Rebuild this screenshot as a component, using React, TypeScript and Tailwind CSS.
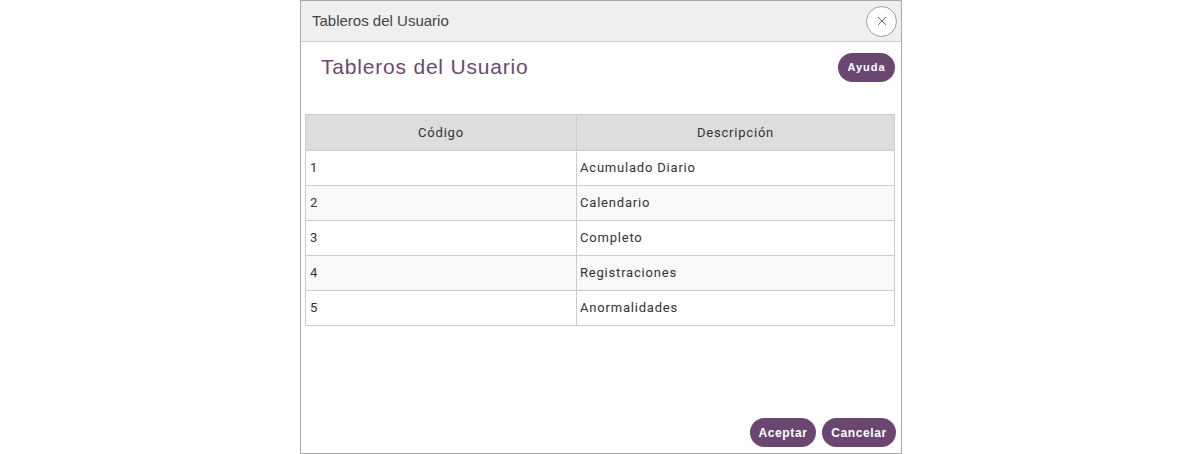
import React from "react";

const rows = [
  ["1", "Acumulado Diario"],
  ["2", "Calendario"],
  ["3", "Completo"],
  ["4", "Registraciones"],
  ["5", "Anormalidades"],
];

export default function App() {
  return (
    <div className="w-[1200px] h-[454px] bg-white">
      <div className="ml-[300px] w-[602px] h-[454px] border border-[#aaaaaa] flex flex-col bg-white">
        <div className="h-[41px] bg-[#efefef] border-b border-[#cccccc] flex items-center justify-between pl-[11px] pr-[4px] shrink-0">
          <span className="text-[15px] text-[#444444] font-['Liberation_Sans',Arial,sans-serif]">Tableros del Usuario</span>
          <button className="w-[31px] h-[31px] rounded-full border border-[#a0a0a0] bg-white flex items-center justify-center text-[#555555]">
            <svg width="10" height="10" viewBox="0 0 10 10">
              <path d="M1 1L9 9M9 1L1 9" stroke="#666" strokeWidth="1" />
            </svg>
          </button>
        </div>
        <div className="flex items-start justify-between pl-[20px] pr-[6px] pt-[12px] h-[72px] shrink-0">
          <h1 className="text-[21px] leading-[26px] tracking-[0.8px] text-[#6a4a6e] font-['Liberation_Sans',Arial,sans-serif]">Tableros del Usuario</h1>
          <button className="-mt-[1px] h-[29px] w-[57px] rounded-full bg-[#6a4670] text-white text-[11px] font-bold tracking-[1px] font-['Liberation_Sans',Arial,sans-serif]">Ayuda</button>
        </div>
        <div className="px-[4px] flex-1">
          <table className="w-[590px] border-collapse font-['Roboto',sans-serif] text-[13px] tracking-[0.8px] text-[#333333]">
            <thead>
              <tr className="h-[36px] bg-[#dddddd]">
                <th className="w-[271px] border border-[#cccccc] font-normal text-center">Código</th>
                <th className="border border-[#cccccc] font-normal text-center">Descripción</th>
              </tr>
            </thead>
            <tbody>
              {rows.map(([c, d], i) => (
                <tr key={c} className={i % 2 === 1 ? "h-[35px] bg-[#f9f9f9]" : "h-[35px] bg-white"}>
                  <td className="border border-[#cccccc] px-[4px]">{c}</td>
                  <td className="border border-[#cccccc] px-[3px]">{d}</td>
                </tr>
              ))}
            </tbody>
          </table>
        </div>
        <div className="flex justify-end gap-[6px] pr-[5px] pb-[6px] shrink-0">
          <button className="h-[29px] w-[66px] rounded-full bg-[#6a4670] text-white text-[12px] font-bold tracking-[0.6px] font-['Liberation_Sans',Arial,sans-serif]">Aceptar</button>
          <button className="h-[29px] w-[74px] rounded-full bg-[#6a4670] text-white text-[12px] font-bold tracking-[0.6px] font-['Liberation_Sans',Arial,sans-serif]">Cancelar</button>
        </div>
      </div>
    </div>
  );
}
